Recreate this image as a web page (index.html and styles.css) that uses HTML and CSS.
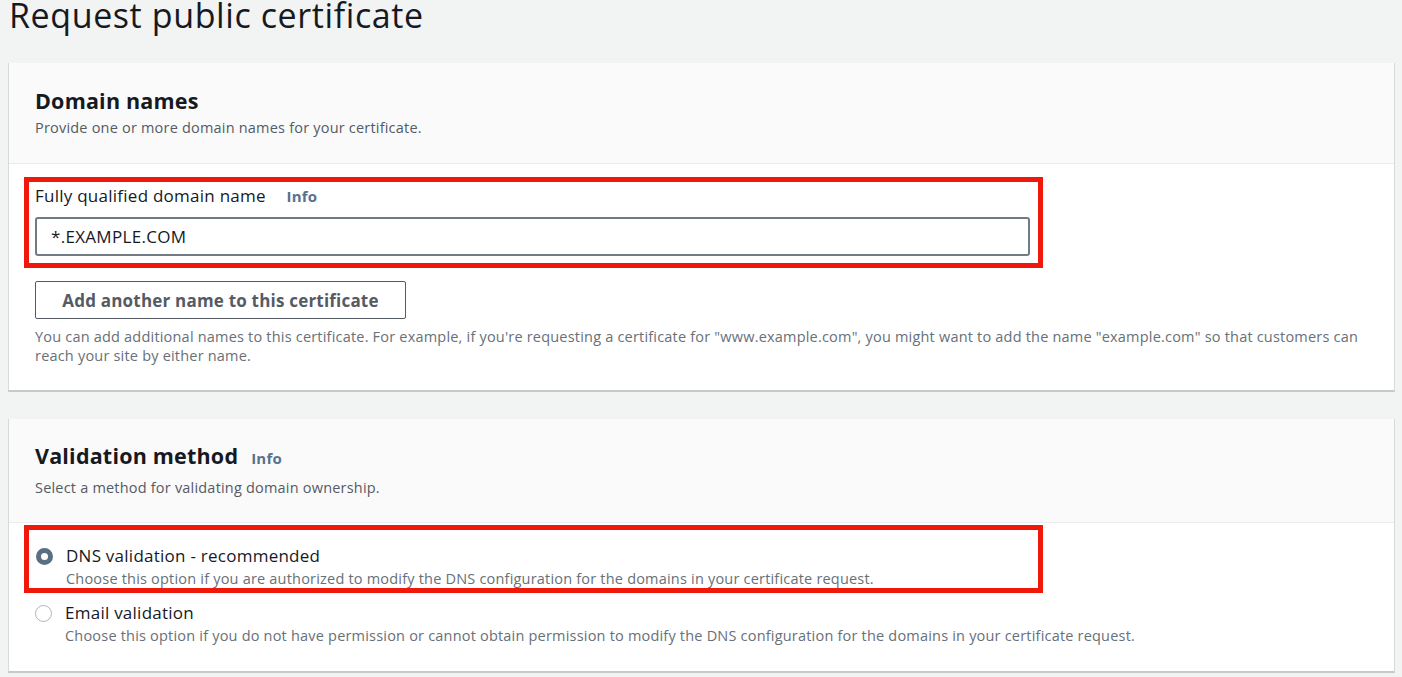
FILE: index.html
```html
<!DOCTYPE html>
<html lang="en">
<head>
<meta charset="utf-8">
<title>Request public certificate</title>
<link rel="stylesheet" href="styles.css">
</head>
<body>
<h1 class="page-title">Request public certificate</h1>

<section class="card">
  <header class="card-header">
    <h2 class="card-title">Domain names</h2>
    <p class="card-desc">Provide one or more domain names for your certificate.</p>
  </header>
  <div class="card-body">
    <div class="highlight highlight-field">
      <label class="field-label">Fully qualified domain name <span class="info">Info</span></label>
      <div class="input">*.EXAMPLE.COM</div>
    </div>
    <button class="btn">Add another name to this certificate</button>
    <p class="help">You can add additional names to this certificate. For example, if you're requesting a certificate for "www.example.com", you might want to add the name "example.com" so that customers can reach your site by either name.</p>
  </div>
</section>

<section class="card card-second">
  <header class="card-header">
    <h2 class="card-title">Validation method <span class="info info-title">Info</span></h2>
    <p class="card-desc">Select a method for validating domain ownership.</p>
  </header>
  <div class="card-body card-body-radios">
    <div class="highlight highlight-radio">
      <div class="radio-row">
        <span class="radio radio-checked"></span>
        <div class="radio-text">
          <div class="radio-label">DNS validation - recommended</div>
          <div class="radio-desc">Choose this option if you are authorized to modify the DNS configuration for the domains in your certificate request.</div>
        </div>
      </div>
    </div>
    <div class="radio-row radio-row-plain">
      <span class="radio"></span>
      <div class="radio-text">
        <div class="radio-label">Email validation</div>
        <div class="radio-desc">Choose this option if you do not have permission or cannot obtain permission to modify the DNS configuration for the domains in your certificate request.</div>
      </div>
    </div>
  </div>
</section>
</body>
</html>
```

FILE: styles.css
```css
* { box-sizing: border-box; }

html, body {
  margin: 0;
  padding: 0;
}

body {
  background: #f2f3f3;
  font-family: "Open Sans", "Liberation Sans", sans-serif;
  color: #16191f;
  padding: 0 7px 0 8px;
  overflow: hidden;
}

.page-title {
  margin: 0;
  padding: 0 0 0 1px;
  font-size: 34px;
  font-weight: 400;
  line-height: 30px;
  height: 63px;
  letter-spacing: 0.6px;
  color: #16191f;
}

.card {
  background: #ffffff;
  border-left: 1px solid #d5dbdb;
  border-right: 1px solid #d5dbdb;
  border-bottom: 2px solid #c4cacb;
}

.card-second {
  margin-top: 27px;
}

.card-header {
  background: #fafafa;
  border-bottom: 1px solid #eaeded;
  padding: 24px 26px 0;
  height: 101px;
}

.card-second .card-header {
  height: 104px;
  padding-top: 23px;
}

.card-title {
  margin: 0;
  font-size: 21.5px;
  line-height: 28px;
  font-weight: 700;
  letter-spacing: 0.2px;
  display: flex;
  align-items: baseline;
}

.card-desc {
  margin: 4px 0 0;
  font-size: 14.5px;
  line-height: 18px;
  letter-spacing: 0.2px;
  color: #545b64;
}

.card-second .card-desc {
  margin-top: 7px;
}

.info {
  font-size: 15px;
  font-weight: 700;
  letter-spacing: 0.2px;
  color: #57728a;
  margin-left: 16px;
}

.info-title {
  margin-left: 13px;
}

.card-body {
  padding: 13px 26px 25px;
}

.highlight {
  border: 5px solid #f0180a;
  margin-left: -11px;
}

.highlight-field {
  width: 1019px;
  padding: 2px 8px 7px 6px;
}

.field-label {
  display: block;
  font-size: 17px;
  line-height: 24px;
  letter-spacing: 0.25px;
  color: #16191f;
}

.input {
  margin-top: 9px;
  height: 39px;
  border: 2px solid #707b86;
  border-radius: 3px;
  padding: 0 14px;
  font-size: 17px;
  line-height: 35px;
  letter-spacing: 0.3px;
  color: #16191f;
}

.btn {
  display: block;
  margin-top: 13px;
  width: 371px;
  height: 38px;
  background: #ffffff;
  border: 1px solid #545b64;
  border-radius: 2px;
  font-family: inherit;
  font-size: 17px;
  font-weight: 700;
  letter-spacing: 0.2px;
  color: #545b64;
  padding: 0;
}

.help {
  margin: 8px 0 0;
  font-size: 14.5px;
  line-height: 19px;
  letter-spacing: 0.2px;
  color: #687078;
}

.card-body-radios {
  padding: 2px 26px 26px;
}

.highlight-radio {
  width: 1019px;
  padding: 16px 8px 0 7px;
}

.radio-row {
  display: flex;
  align-items: flex-start;
}

.radio-row-plain {
  padding-top: 10px;
}

.radio {
  flex: none;
  width: 17px;
  height: 17px;
  border-radius: 50%;
  border: 1.5px solid #aab7b8;
  background: #fff;
  margin-top: 2px;
  margin-right: 13px;
}

.radio-checked {
  border: 5.5px solid #5a6f82;
  background: #fff;
}

.radio-label {
  font-size: 17px;
  line-height: 20px;
  letter-spacing: 0.25px;
  color: #16191f;
}

.radio-desc {
  font-size: 14.5px;
  line-height: 18px;
  letter-spacing: 0.2px;
  color: #687078;
  margin-top: 4px;
}
```
